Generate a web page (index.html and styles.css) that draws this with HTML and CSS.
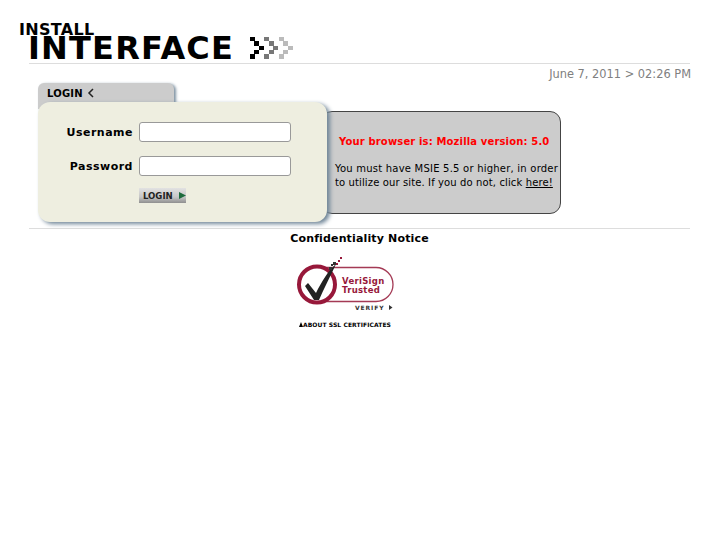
FILE: index.html
```html
<!DOCTYPE html>
<html lang="en">
<head>
<meta charset="utf-8">
<title>Install Interface</title>
<link rel="stylesheet" href="styles.css">
</head>
<body>
<header class="masthead">
  <div class="brand-top">INSTALL</div>
  <div class="brand-main">
    <span class="brand-name">INTERFACE</span>
    <svg class="brand-arrows" width="45" height="24" viewBox="0 0 45 24" aria-hidden="true">
      <g fill="#000"><rect x="0" y="0" width="5" height="4"/><rect x="4" y="4" width="5" height="5"/><rect x="9" y="9" width="5" height="4"/><rect x="4" y="13" width="5" height="4"/><rect x="0" y="17" width="5" height="5"/></g>
      <g fill="#777"><rect x="14" y="0" width="5" height="4"/><rect x="19" y="4" width="5" height="5"/><rect x="23" y="9" width="5" height="4"/><rect x="19" y="13" width="5" height="4"/><rect x="14" y="17" width="5" height="5"/></g>
      <g fill="#bbb"><rect x="29" y="0" width="5" height="4"/><rect x="33" y="4" width="5" height="5"/><rect x="38" y="9" width="5" height="4"/><rect x="33" y="13" width="5" height="4"/><rect x="29" y="17" width="5" height="5"/></g>
    </svg>
  </div>
</header>
<div class="date">June 7, 2011 &gt; 02:26 PM</div>
<main class="login-area">
  <div class="tab">
    <span>LOGIN</span>
    <svg width="7" height="10" viewBox="0 0 7 10" aria-hidden="true"><path d="M6 1L2 5l4 4" fill="none" stroke="#222" stroke-width="1.500"/></svg>
  </div>
  <div class="panels">
    <form class="panel">
      <div class="field"><label for="u">Username</label><input id="u" type="text"></div>
      <div class="field"><label for="p">Password</label><input id="p" type="password"></div>
      <button class="btn" type="button">LOGIN<svg width="7" height="7" viewBox="0 0 7 7" aria-hidden="true"><path d="M0 0l7 3.500-7 3.500z" fill="#1d6b3c"/></svg></button>
    </form>
    <section class="info">
      <p class="warn">Your browser is: Mozilla version: 5.0</p>
      <p class="msg">You must have MSIE 5.5 or higher, in order<br><span class="msg-tight">to utilize our site. If you do not, click <a href="#">here!</a></span></p>
    </section>
  </div>
</main>
<footer class="foot">
  <div class="notice">Confidentiality Notice</div>
  <svg class="seal" width="100" height="60" viewBox="0 0 100 60" aria-hidden="true">
    <path d="M22 12.500H81a17 17 0 0 1 0 34H22" fill="none" stroke="#a43a55" stroke-width="1.300"/>
    <circle cx="22" cy="29.500" r="18" fill="#fff" stroke="#97183a" stroke-width="4"/>
    <path d="M13 28l8 10C27 26 33 16 41 9C35 22 29 33 24 45h-5L10 31z" fill="#222"/>
    <g fill="#333"><rect x="34" y="12" width="3" height="3"/><rect x="38" y="7" width="3" height="3"/><rect x="36" y="9" width="2" height="2"/></g>
    <g fill="#97183a"><rect x="43" y="5" width="2" height="2"/><rect x="45" y="2" width="2" height="2"/><rect x="41" y="8" width="2" height="2"/></g>
    <text x="47" y="29" class="seal-text">VeriSign</text>
    <text x="47" y="38" class="seal-text">Trusted</text>
    <text x="60" y="55" class="seal-verify">VERIFY</text>
    <path d="M94 50l3.500 2.500-3.500 2.500z" fill="#333"/>
  </svg>
  <div class="about"><span class="tri"></span>ABOUT SSL CERTIFICATES</div>
</footer>
</body>
</html>
```
FILE: styles.css
```css
html, body { margin: 0; padding: 0; background: #fff; }
body { font-family: "DejaVu Sans", sans-serif; color: #000; width: 727px; height: 545px; overflow: hidden; }

.masthead { margin: 0 37px 0 29px; height: 64px; border-bottom: 1px solid #ddd; box-sizing: border-box; padding-top: 22px; }
.brand-top { margin-left: -10px; font-size: 16px; font-weight: bold; line-height: 16px; letter-spacing: 0.3px; }
.brand-main { display: flex; align-items: center; gap: 16px; margin-top: -6px; margin-left: -1px; }
.brand-name { font-size: 32px; font-weight: bold; line-height: 32px; letter-spacing: 1.2px; }
.brand-arrows { margin-top: 1px; }

.date { margin: 3px 36px 0 0; text-align: right; font-size: 11.400px; line-height: 14px; color: #808080; }

.login-area { margin: 2px 0 0 38px; }
.tab { width: 136px; height: 26px; box-sizing: border-box; padding: 4px 9px; display: flex; align-items: flex-start; gap: 4px; background: #ccc; border-radius: 6px 6px 0 0; box-shadow: 2px 1px 3px #7f93a3; font-size: 10px; font-weight: bold; line-height: 13px; letter-spacing: 0.2px; }
.tab svg { margin-top: 1px; }

.panels { display: flex; align-items: flex-start; margin-top: -7px; position: relative; }
.panel { position: relative; z-index: 1; width: 289px; height: 120px; box-sizing: border-box; padding-top: 20px; background: #eeeee0; border-radius: 12px; box-shadow: 3px 2px 4px #6f8597; }
.field { display: flex; align-items: center; justify-content: flex-end; gap: 6px; width: 253px; height: 20px; margin-bottom: 14px; font-size: 11px; font-weight: bold; letter-spacing: 0.5px; }
.field input { width: 152px; height: 20px; box-sizing: border-box; margin: 0; padding: 0; background: #fff; border: 1px solid #999; border-radius: 3px; }
.btn { display: flex; align-items: center; gap: 6px; width: 47px; height: 15px; margin: -2px 0 0 101px; padding: 0 0 0 4px; box-sizing: border-box; border: 0; background: linear-gradient(#e2e2e2, #c6c6c6 60%, #8f8f8f); font-family: "DejaVu Sans Condensed", "DejaVu Sans", sans-serif; font-stretch: condensed; font-size: 9.500px; font-weight: bold; color: #222; }

.info { margin: 9px 0 0 -6px; width: 240px; height: 103px; box-sizing: border-box; padding: 23px 0 0 12px; background: #ccc; border: 1px solid #444; border-radius: 11px; font-size: 10px; }
.info p { margin: 0; white-space: nowrap; }
.warn { color: #f00; font-weight: bold; font-size: 10px; line-height: 13px; letter-spacing: 0.15px; padding-left: 5px; }
.msg { margin-top: 14px !important; padding-left: 1px; line-height: 14px; letter-spacing: 0.22px; }
.msg-tight { letter-spacing: 0.12px; }
.msg a { color: #000; text-decoration: underline; }

.foot { margin: 6px 37px 0 29px; border-top: 1px solid #ddd; text-align: center; display: flex; flex-direction: column; align-items: center; }
.notice { margin-top: 3px; font-size: 11px; font-weight: bold; line-height: 14px; letter-spacing: 0.15px; }
.seal { margin: 9px 0 0 -29px; }
.seal-text { font-family: "DejaVu Sans", sans-serif; font-size: 8.500px; font-weight: bold; fill: #97183a; letter-spacing: 0.3px; }
.seal-verify { font-family: "DejaVu Sans", sans-serif; font-size: 6px; font-weight: bold; fill: #333; letter-spacing: 0.9px; }
.about { margin: 6px 0 0 -29px; font-size: 6px; font-weight: bold; line-height: 8px; white-space: nowrap; letter-spacing: 0.08px; }
.tri { display: inline-block; width: 0; height: 0; border: 2.500px solid transparent; border-top: 0; border-bottom: 5px solid #000; }
```
